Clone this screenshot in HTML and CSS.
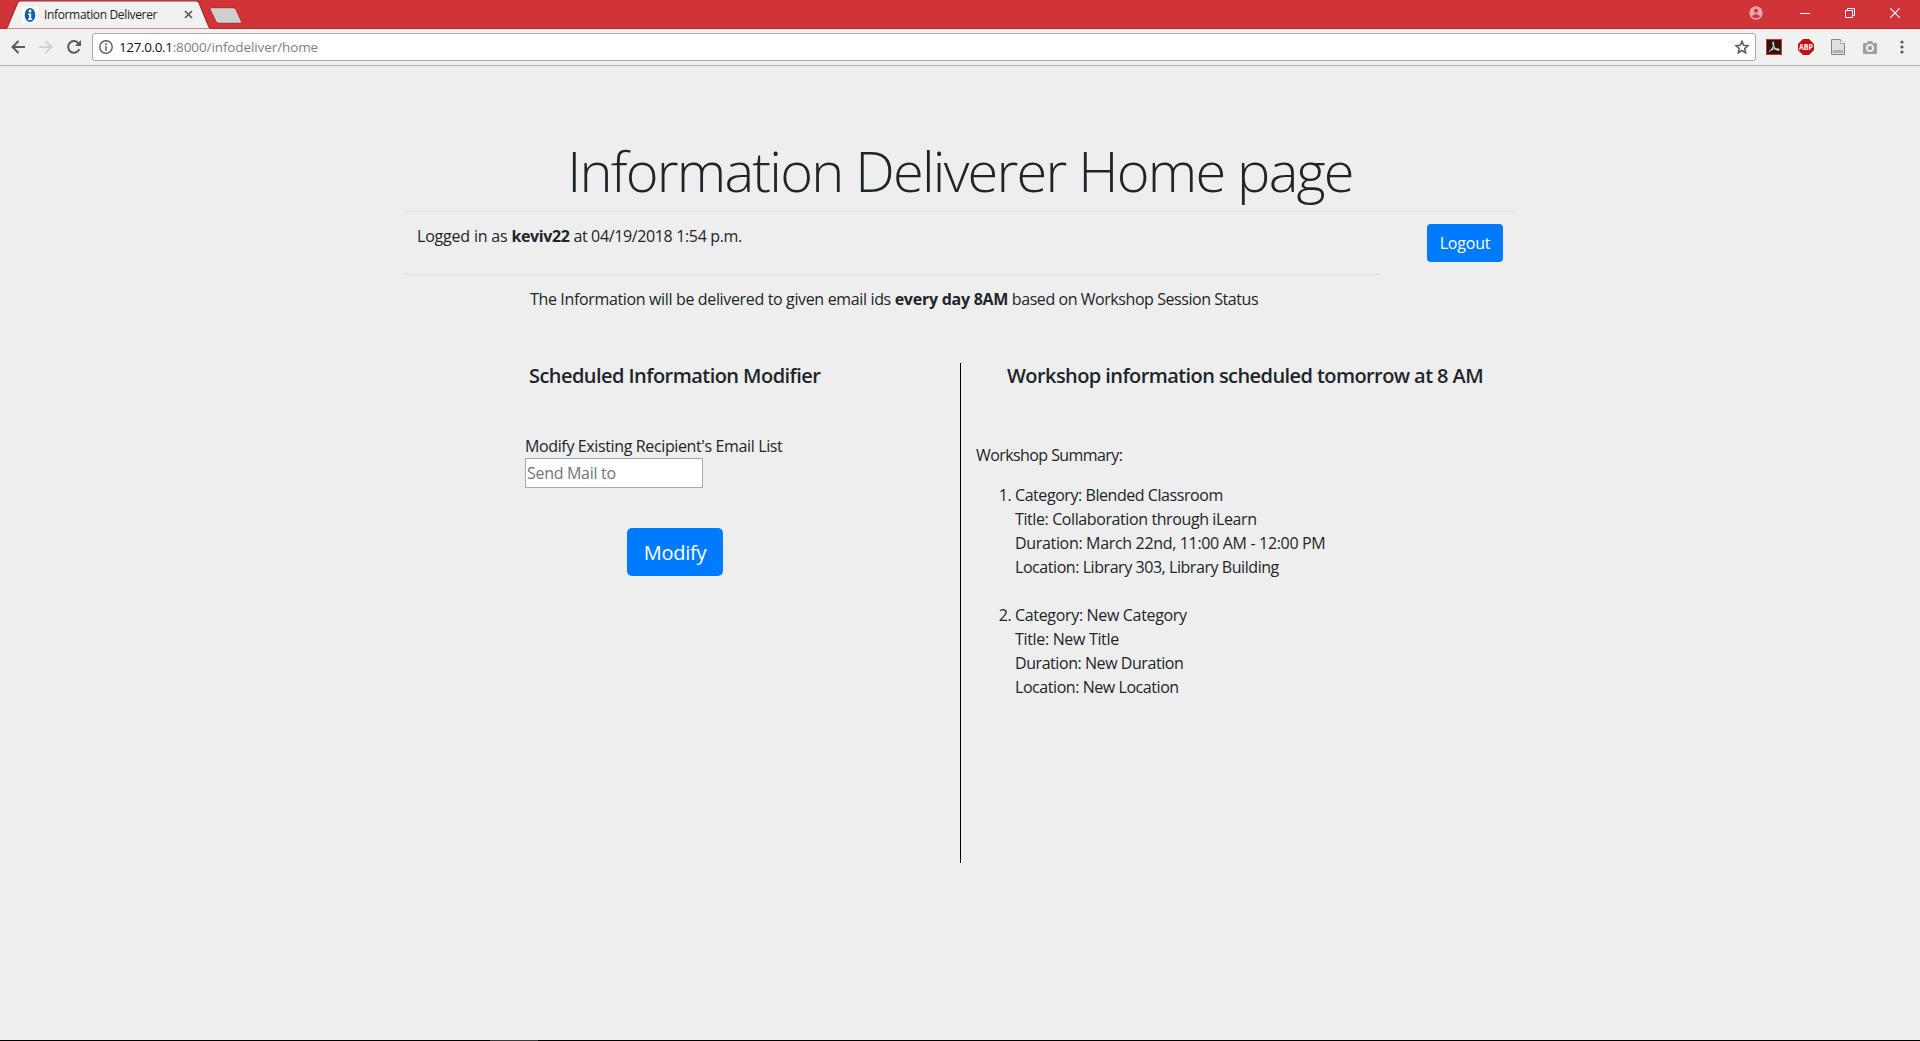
FILE: index.html
```html
<!DOCTYPE html>
<html lang="en">
<head>
<meta charset="utf-8">
<title>Information Deliverer</title>
<link rel="stylesheet" href="styles.css">
</head>
<body>
<div class="browser">
  <header class="tabstrip">
    <div class="tab">
      <svg class="tab-shape" width="244" height="29" viewBox="0 0 244 29">
        <path d="M5 29 L7.500 27 L17.500 3 Q18.500 .8 20.500 .8 H196 Q198 .8 199 3 L208.500 26 Q210 29 213 29 Z" fill="#f1f1f1" stroke="#a92a2e" stroke-width="1.200"/>
        <path d="M211.500 7.700 H233 Q235 7.700 236 9.500 L241.500 21.500 Q242 23.300 240 23.300 H219 Q217 23.300 216 21.500 L210 9.300 Q209.500 7.700 211.500 7.700Z" fill="#cfcfcf" stroke="#a92a2e"/>
      </svg>
      <svg class="favicon" width="16" height="16" viewBox="0 0 16 16">
        <rect width="16" height="16" fill="#fff"/>
        <ellipse cx="8" cy="8" rx="5.300" ry="7" fill="#0b61b0"/>
        <circle cx="8" cy="3.900" r="1.500" fill="#fff"/>
        <path d="M6 6.500h3.200v5h1V13H6v-1.500h1V8H6z" fill="#fff"/>
      </svg>
      <span class="tab-title">Information Deliverer</span>
      <svg class="tab-close" width="9" height="9" viewBox="0 0 9 9"><path d="M1 1l7 7M8 1L1 8" stroke="#5a5a5a" stroke-width="1.700"/></svg>
    </div>
    <div class="window-buttons">
      <svg width="14" height="14" viewBox="0 0 14 14"><circle cx="7" cy="7" r="6.700" fill="#eda4a6"/><circle cx="7" cy="4.700" r="2" fill="#d13438"/><path d="M2.800 10.200Q7 6.200 11.200 10.200Q9.500 12.300 7 12.300T2.800 10.200z" fill="#d13438"/></svg>
      <svg width="10" height="10" viewBox="0 0 10 10"><path d="M0 5.500h10" stroke="#fff"/></svg>
      <svg width="10" height="10" viewBox="0 0 10 10" fill="none" stroke="#fff"><path d="M.5 2.500h7v7h-7zM2.500 2.500v-2h7v7h-2"/></svg>
      <svg width="10" height="10" viewBox="0 0 10 10"><path d="M.3.3l9.400 9.400M9.700.3L.3 9.700" stroke="#fff" stroke-width="1.200"/></svg>
    </div>
  </header>
  <nav class="toolbar">
    <div class="nav-buttons">
      <svg width="14" height="14" viewBox="0 0 14 14" fill="none" stroke="#5a5a5a" stroke-width="2"><path d="M14 7H1.500M7.500 1L1.500 7l6 6"/></svg>
      <svg width="14" height="14" viewBox="0 0 14 14" fill="none" stroke="#d2d2d2" stroke-width="2"><path d="M0 7h12.500M6.500 1l6 6-6 6"/></svg>
      <svg width="14" height="14" viewBox="0 0 14 14"><path d="M12.300 9.200A5.800 5.800 0 1 1 11.500 3.300" fill="none" stroke="#5a5a5a" stroke-width="2"/><path d="M14 0v6H8z" fill="#5a5a5a"/></svg>
    </div>
    <div class="address">
      <svg width="14" height="14" viewBox="0 0 14 14"><circle cx="7" cy="7" r="6.200" fill="none" stroke="#5a5a5a" stroke-width="1.400"/><path d="M6.200 3.300h1.600v1.600H6.200zM6.200 6.200h1.600v4.500H6.200z" fill="#5a5a5a"/></svg>
      <span class="url"><span class="host">127.0.0.1</span><span class="path">:8000/infodeliver/home</span></span>
      <svg width="14" height="14" viewBox="0 0 14 14"><path d="M7 1.300l1.700 4 4.300.4-3.300 2.900 1 4.200L7 10.500l-3.700 2.300 1-4.200L1 5.700l4.300-.4z" fill="none" stroke="#5a5a5a" stroke-width="1.500"/></svg>
    </div>
    <div class="extensions">
      <svg width="16" height="16" viewBox="0 0 16 16"><rect x=".5" y=".5" width="15" height="15" fill="#2b1416" stroke="#d8321a"/><path d="M3 12.500C6 11 8.500 7 7.500 3.500C7 2.500 6.600 4 7.300 6C8.500 9.500 11 11.500 13 11C13.500 9.500 8 9 4.500 11.300" fill="none" stroke="#dcd6d6" stroke-width="1.100"/></svg>
      <svg width="16" height="16" viewBox="0 0 16 16"><path d="M5 0h6l5 5v6l-5 5H5l-5-5V5z" fill="#c70d0d"/><text class="abp" x="8" y="11" text-anchor="middle" textLength="14" lengthAdjust="spacingAndGlyphs">ABP</text></svg>
      <svg width="14" height="16" viewBox="0 0 14 16"><path d="M.5.500h9l4 4v11H.5z" fill="#e0e0e0" stroke="#858585"/><path d="M9.500.5v4h4" fill="#fff" stroke="#aaa"/><path d="M2 11.500h10v2H2z" fill="#b5b5b5" stroke="#999" stroke-width=".5"/></svg>
      <svg width="14" height="13" viewBox="0 0 14 13"><path d="M1 2h3l1-2h4l1 2h3q1 0 1 1v9q0 1-1 1H1q-1 0-1-1V3q0-1 1-1z" fill="#9f9f9f"/><circle cx="7" cy="7" r="3.100" fill="none" stroke="#f1f1f1" stroke-width="1.700"/></svg>
      <svg width="4" height="14" viewBox="0 0 4 14" fill="#5a5a5a"><circle cx="2" cy="2" r="1.600"/><circle cx="2" cy="7" r="1.600"/><circle cx="2" cy="12" r="1.600"/></svg>
    </div>
  </nav>

  <main class="page">
    <h1 class="title">Information Deliverer Home page</h1>
    <div class="status">
      <p class="login"><span class="login-lead">Logged in as </span><b>keviv22</b> at 04/19/2018 1:54 p.m.</p>
      <button class="btn btn-logout">Logout</button>
    </div>
    <p class="notice">The Information will be delivered to given email ids <b>every day 8AM</b><span class="notice-tail"> based on Workshop Session Status</span></p>
    <div class="columns">
      <section class="modifier">
        <h2 class="heading">Scheduled Information Modifier</h2>
        <form class="form">
          <label class="label" for="mail">Modify Existing Recipient's Email List</label>
          <input class="input" id="mail" type="text" placeholder="Send Mail to">
          <button class="btn btn-modify" type="button">Modify</button>
        </form>
      </section>
      <section class="workshops">
        <h2 class="heading heading-workshops">Workshop information scheduled tomorrow at 8 AM</h2>
        <p class="summary">Workshop Summary:</p>
        <ol class="list">
          <li>
            <div>Category: Blended Classroom</div>
            <div class="session-title">Title: Collaboration through iLearn</div>
            <div class="duration">Duration: March 22nd, 11:00 AM - 12:00 PM</div>
            <div>Location: Library 303, Library Building</div>
          </li>
          <li>
            <div class="duration">Category: New Category</div>
            <div class="duration">Title: New Title</div>
            <div>Duration: New Duration</div>
            <div>Location: New Location</div>
          </li>
        </ol>
      </section>
    </div>
  </main>
  <footer class="taskbar-edge"><div class="taskbar-item"></div></footer>
</div>
</body>
</html>
```
FILE: styles.css
```css
* { box-sizing: border-box; }

body {
  margin: 0;
  background: #eee;
  color: #212529;
  font: 16px/24px "Open Sans", "Noto Sans", sans-serif;
  letter-spacing: -0.38px;
}

h1, h2, p, ol { margin: 0; }
svg { display: block; flex: none; }

.browser {
  display: flex;
  flex-direction: column;
  height: 1041px;
  overflow: hidden;
}

/* Window frame */
.tabstrip {
  display: flex;
  flex: none;
  justify-content: space-between;
  height: 29px;
  background: #d13438;
  border-bottom: 1px solid #a92a2e;
}

.tab {
  position: relative;
  display: flex;
  align-items: center;
  width: 244px;
  height: 29px;
  padding-left: 22px;
}

.tab-shape { position: absolute; left: 0; top: 0; }
.favicon, .tab-close { position: relative; }

.tab-title {
  position: relative;
  width: 141px;
  padding-left: 6px;
  color: #222;
  font-size: 12px;
  letter-spacing: -0.35px;
  white-space: nowrap;
}

.tab-close { margin-left: 5px; }

.window-buttons {
  display: flex;
  align-items: center;
  height: 26px;
  gap: 35px;
  padding-right: 20px;
}

.window-buttons svg:first-child { margin-right: 2px; }

.toolbar {
  display: flex;
  flex: none;
  align-items: center;
  height: 37px;
  background: #f1f1f1;
  border-bottom: 1px solid #b4b4b4;
}

.nav-buttons {
  display: flex;
  gap: 14px;
  width: 92px;
  padding-left: 11px;
}

.address {
  display: flex;
  align-items: center;
  width: 1664px;
  height: 28px;
  padding: 0 6px;
  background: #fff;
  border: 1px solid #a9a9a9;
  border-radius: 3px;
}

.url {
  flex: 1;
  padding-left: 6px;
  font-size: 13.5px;
  letter-spacing: -0.1px;
}

.host { color: #111; letter-spacing: -0.37px; }
.path { color: #808080; }

.extensions {
  display: flex;
  align-items: center;
  gap: 17px;
  padding-left: 10px;
}

.extensions svg:nth-child(2) { margin-left: -1px; }
.extensions svg:nth-child(4) { margin-left: 1px; }
.extensions svg:last-child { margin-left: 6px; }

.abp {
  fill: #fff;
  font: bold 8px "Open Sans", sans-serif;
  letter-spacing: 0;
}

/* Page */
.page {
  flex: 1;
  width: 1110px;
  margin: 0 auto;
  padding-top: 71px;
}

.title {
  height: 75px;
  border-bottom: 1px solid #dee2e6;
  font-size: 56px;
  font-weight: 300;
  line-height: 67px;
  letter-spacing: -1.8px;
  text-align: center;
  white-space: nowrap;
}

.status { display: flex; }

.login {
  width: 976px;
  height: 63px;
  padding: 12px;
  border-bottom: 1px solid #dee2e6;
  letter-spacing: -0.36px;
}

.login-lead { letter-spacing: -0.2px; }

.btn {
  padding: 0;
  border: 0;
  border-radius: 4px;
  background: #007bff;
  color: #fff;
  font-family: inherit;
}

.btn-logout {
  width: 76px;
  height: 38px;
  margin: 12px 0 0 46px;
  font-size: 16px;
  letter-spacing: -0.2px;
}

.notice {
  padding: 12px 0 0 125px;
  letter-spacing: -0.35px;
}

.notice b { letter-spacing: -0.26px; }
.notice-tail { letter-spacing: -0.44px; }

.columns {
  display: flex;
  height: 500px;
  margin-top: 52px;
}

.modifier {
  width: 555px;
  padding-left: 120px;
}

.heading {
  height: 24px;
  padding-left: 4px;
  font-size: 20px;
  font-weight: 600;
  line-height: 26px;
  letter-spacing: -0.55px;
  white-space: nowrap;
}

.form {
  display: flex;
  flex-direction: column;
  align-items: flex-start;
  padding-top: 47px;
}

.label { letter-spacing: -0.37px; }

.input {
  width: 178px;
  height: 30px;
  padding: 1px;
  border: 1px solid #a9a9a9;
  font: inherit;
  letter-spacing: -0.3px;
}

.input::placeholder { color: #757575; }

.btn-modify {
  width: 96px;
  height: 48px;
  margin: 40px 0 0 102px;
  border-radius: 5px;
  font-size: 20px;
  letter-spacing: -0.3px;
}

.workshops {
  width: 555px;
  padding-left: 15px;
  border-left: 1px solid #000;
}

.heading-workshops { padding-left: 31px; letter-spacing: -0.58px; }
.summary { padding-top: 56px; letter-spacing: -0.58px; }

.list {
  display: flex;
  flex-direction: column;
  gap: 24px;
  padding: 16px 0 0 39px;
  letter-spacing: -0.44px;
}

.session-title { letter-spacing: -0.4px; }
.duration { letter-spacing: -0.33px; }

.taskbar-edge {
  flex: none;
  height: 1px;
  padding-left: 490px;
  background: #000;
}

.taskbar-item { width: 48px; height: 1px; background: #3a3a3a; }
```
